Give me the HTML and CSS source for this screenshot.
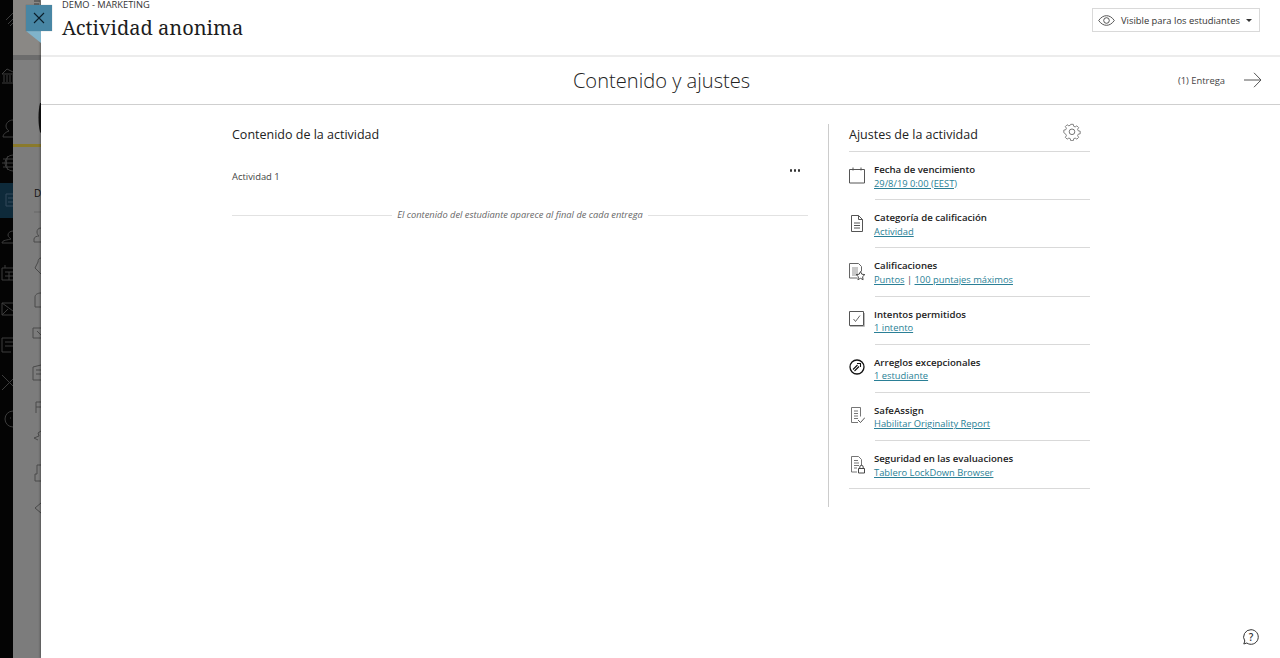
FILE: index.html
```html
<!DOCTYPE html>
<html lang="es">
<head>
<meta charset="utf-8">
<title>Actividad anonima</title>
<link rel="stylesheet" href="styles.css">
</head>
<body>
<div class="app">
  <nav class="rail">
    <div class="rail-active"></div>
    <svg class="rail-art" width="13" height="658" viewBox="0 0 13 658" fill="none" stroke="#3c3c3c" stroke-width="1">
      <path d="M6 20l7-7M8 24l5-5M10 26l3-3"/>
      <path d="M2 74l5-5 6 3M2 74h11M4 75v7M7 75v7M10 75v7M13 75v7M2 83h11"/>
      <path d="M13 120c-4 0-7 3-7 6s2 4 3 5c-3 1-6 3-6 6h10"/>
      <path d="M13 155a8 8 0 0 0 0 16M2 163h11M8 156c-2 4-2 10 0 14M3 159h10M3 167h10"/>
      <path d="M6 194h7M6 194v12h7M8 198h5M8 202h5" stroke="#33495a"/>
      <path d="M13 231c-3 0-5 2-5 4s2 3 3 4c-3 1-9 1-9 4h11"/>
      <path d="M2 268h11M2 268v12h11M5 265v3M5 272h8M5 276h8M9 272v8"/>
      <path d="M2 303h11M2 303v12h11M2 303l11 8M2 315l6-6"/>
      <path d="M2 338h11M2 338v14h9M5 342h8M5 346h8"/>
      <path d="M2 375l11 11M2 390l11-11"/>
      <path d="M13 411a8 8 0 0 0 0 16M10 418h1"/>
    </svg>
  </nav>
  <aside class="backdrop">
    <div class="back-top"></div>
    <div class="back-rule"></div>
    <div class="back-band"></div>
    <div class="back-list"></div>
    <span class="back-letter">D</span>
    <svg class="back-art" width="28" height="658" viewBox="0 0 28 658" fill="none" stroke="#4a4a4a">
      <path d="M21 1h6M21 4h5" stroke="#3a3a3a"/>
      <path d="M27 103c-2 8-2 21 0 29l1 1v-30z" fill="#111" stroke="none"/>
      <path d="M21 212h7" stroke="#666"/>
      <path d="M28 228c-3 0-4 2-4 4s1 3 2 4c-2 0-5 1-5 3v3h7"/>
      <path d="M28 258c-2 0-3 2-3 4l-3 6 6 6"/>
      <path d="M28 293c-4 0-6 2-6 4v10h6"/>
      <path d="M28 328h-8v10h8M24 331l4 4"/>
      <path d="M28 365l-8 2v13h8M23 370h5M23 374h5"/>
      <path d="M28 402h-5v5h5M23 407v6"/>
      <path d="M28 431l-3 2 1 3-5 2 4 2"/>
      <path d="M28 465h-4v9h-2v7h6"/>
      <path d="M28 503l-6 5 6 5"/>
    </svg>
  </aside>
  <main class="panel">
    <a class="close" href="#" aria-label="Cerrar">
      <svg width="12" height="12" viewBox="0 0 12 12" fill="none" stroke="#0b1f2b" stroke-width="1.1"><path d="M1 1l10 10M11 1L1 11"/></svg>
    </a>
    <div class="close-fold"></div>
    <header class="top">
      <div class="titles">
        <div class="crumb">DEMO - MARKETING</div>
        <h1>Actividad anonima</h1>
      </div>
      <button class="visible">
        <svg width="17" height="11" viewBox="0 0 17 11" fill="none" stroke="#444" stroke-width="0.9"><path d="M.7 5.500C3 2.200 5.600.7 8.500.7s5.500 1.500 7.800 4.800C14 8.800 11.400 10.300 8.500 10.300S3 8.800.7 5.500z"/><circle cx="8.500" cy="5.500" r="2.800"/></svg>
        <span>Visible para los estudiantes</span>
        <i class="caret"></i>
      </button>
    </header>
    <section class="subhead">
      <h2>Contenido y ajustes</h2>
      <div class="next">
        <span>(1) Entrega</span>
        <svg width="18" height="16" viewBox="0 0 18 16" fill="none" stroke="#555" stroke-width="1"><path d="M0 8h17M10 .8L17 8l-7 7.200"/></svg>
      </div>
    </section>
    <div class="content">
      <section class="left">
        <h3>Contenido de la actividad</h3>
        <div class="item">
          <span>Actividad 1</span>
          <span class="dots"><b></b><b></b><b></b></span>
        </div>
        <div class="sep"><em>El contenido del estudiante aparece al final de cada entrega</em></div>
      </section>
      <section class="right">
        <div class="right-head">
          <h3>Ajustes de la actividad</h3>
          <svg width="18" height="18" viewBox="0 0 18 18" fill="none" stroke="#666" stroke-width="0.9"><path d="M7.600 1h2.800l.5 2.200 1.600.7 1.900-1.200 2 2-1.200 1.900.7 1.600 2.200.5v2.800l-2.200.5-.7 1.600 1.200 1.900-2 2-1.900-1.200-1.600.7-.5 2.200H7.600l-.5-2.200-1.600-.7-1.900 1.200-2-2 1.200-1.900-.7-1.600L-.1 10.300V7.500l2.200-.5.7-1.600-1.200-1.900 2-2 1.900 1.200 1.600-.7z" transform="translate(.9 .4) scale(.9)"/><circle cx="9" cy="8.800" r="2.800"/></svg>
        </div>
        <ul class="settings">
          <li>
            <svg width="16" height="17" viewBox="0 0 16 17" fill="none" stroke="#555"><path d="M.5 2.500h15v13.500H.5zM4 .5v3M12 .5v3"/></svg>
            <div><strong>Fecha de vencimiento</strong><a href="#">29/8/19 0:00 (EEST)</a></div>
          </li>
          <li>
            <svg width="16" height="18" viewBox="0 0 16 18" fill="none" stroke="#555"><path d="M2.500.5h7l4 4v12h-11zM9.500.5v4h4M5 8h6M5 10.500h6M5 13h6"/></svg>
            <div><strong>Categoría de calificación</strong><a href="#">Actividad</a></div>
          </li>
          <li>
            <svg width="16" height="18" viewBox="0 0 16 18" fill="none" stroke="#666"><path d="M8 15H.5V.5h9l3 3v5"/><path d="M3 4h6v9H3z" fill="#c8c8c8" stroke="none"/><path d="M11.500 8.500l1.300 2.700 3 .4-2.200 2.100.5 3-2.600-1.400-2.600 1.400.5-3-2.200-2.100 3-.4z" fill="#fff" stroke="#333" stroke-width=".9"/></svg>
            <div><strong>Calificaciones</strong><span class="links"><a href="#">Puntos</a> | <a href="#">100 puntajes máximos</a></span></div>
          </li>
          <li>
            <svg width="16" height="17" viewBox="0 0 16 17" fill="none" stroke="#555"><path d="M.5.500h14v14H.5z"/><path d="M1 15.500h14.500V2" stroke="#bbb"/><path d="M4.500 8l2 2.500 4.500-6" stroke-width=".9"/></svg>
            <div><strong>Intentos permitidos</strong><a href="#">1 intento</a></div>
          </li>
          <li>
            <svg width="16" height="16" viewBox="0 0 16 16" fill="none" stroke="#111"><circle cx="8" cy="8" r="7" stroke-width="1.300"/><path d="M4 10.500l4.500-4.500M5.500 12l4.500-4.500M8 4.500h3.500V8" stroke-width="1.100"/></svg>
            <div><strong>Arreglos excepcionales</strong><a href="#">1 estudiante</a></div>
          </li>
          <li>
            <svg width="16" height="18" viewBox="0 0 16 18" fill="none" stroke="#666" stroke-width=".9"><path d="M9 15.500H2.500V.5h9v9M5 4h4M5 6.500h4M5 9h4M5 11.500h4"/><path d="M9 13l2.500 2.500L16 10.500" stroke="#444"/></svg>
            <div><strong>SafeAssign</strong><a href="#">Habilitar Originality Report</a></div>
          </li>
          <li>
            <svg width="16" height="18" viewBox="0 0 16 18" fill="none" stroke="#666" stroke-width=".9"><path d="M8 16H2.500V.5h7l3 3v6M5 4.500h4M5 7h5M5 9.500h5M5 12h3"/><path d="M9.500 12.500h6v4.500h-6zM10.800 12.500V11a1.700 1.700 0 0 1 3.400 0v1.500" stroke="#333"/></svg>
            <div><strong>Seguridad en las evaluaciones</strong><a href="#">Tablero LockDown Browser</a></div>
          </li>
        </ul>
      </section>
    </div>
    <a class="help" href="#" aria-label="Ayuda">
      <svg width="16" height="16" viewBox="0 0 16 16" fill="none" stroke="#333"><path d="M8 .7a7.300 7.300 0 1 1-4.200 13.300l-3 1 1-3A7.300 7.300 0 0 1 8 .7z"/></svg>
      <span>?</span>
    </a>
  </main>
</div>
</body>
</html>
```
FILE: styles.css
```css
* { box-sizing: border-box; }
html, body { margin: 0; height: 100%; overflow: hidden; }
body { font-family: "Open Sans", "Liberation Sans", sans-serif; color: #262626; background: #fff; }
.app { display: flex; height: 658px; }

.rail { width: 13px; flex: none; background: #040404; position: relative; overflow: hidden; }
.rail-art { display: block; position: relative; }
.rail-active { position: absolute; left: 0; top: 183px; width: 13px; height: 35px; background: #0e2a3a; }

.backdrop { width: 28px; flex: none; background: #7c7c7c; display: flex; flex-direction: column; overflow: hidden; position: relative; }
.back-top { height: 55px; background: #8a8885; flex: none; }
.back-rule { height: 5px; background: #6c6c6c; flex: none; }
.back-band { height: 87px; background: #7f7f7f; border-bottom: 3px solid #8a7a2c; flex: none; }
.back-list { flex: 1; }
.back-letter { position: absolute; left: 21px; top: 185px; font-size: 10px; line-height: 16px; color: #111; }
.back-art { position: absolute; left: 0; top: 0; }

.panel { flex: 1; min-width: 0; background: #fff; position: relative; display: flex; flex-direction: column; box-shadow: -1px 0 2px rgba(0,0,0,.3); }

.close { position: absolute; left: -15px; top: 5px; width: 26px; height: 26px; background: #4886a4; display: flex; align-items: center; justify-content: center; box-shadow: 0 0 1px rgba(0,0,0,.3); z-index: 2; }
.close-fold { position: absolute; left: -15px; top: 31px; width: 0; height: 0; border-top: 12px solid #80b3ca; border-left: 15px solid transparent; z-index: 1; }

.top { height: 57px; flex: none; display: flex; justify-content: space-between; align-items: flex-start; padding: 0 20px 0 21px; border-bottom: 2px solid #ececec; }
.crumb { font-size: 9.300px; line-height: 12px; color: #333; margin-top: -1px; }
h1 { margin: 3px 0 0; font-family: "Noto Serif", "DejaVu Serif", "Liberation Serif", serif; font-weight: 400; font-size: 20px; line-height: 28px; color: #1d1d1d; }
.visible { margin-top: 8px; width: 168px; height: 24px; border: 1px solid #d9d9d9; background: #fff; display: flex; align-items: center; padding: 0 7px 0 5px; font: 400 9.400px "Open Sans", sans-serif; color: #333; }
.visible svg { flex: none; }
.visible span { margin-left: 6px; white-space: nowrap; }
.caret { margin-left: 6px; width: 0; height: 0; border: 3px solid transparent; border-top-color: #333; border-bottom: 0; }

.subhead { height: 48px; flex: none; display: flex; align-items: center; justify-content: center; position: relative; border-bottom: 1px solid #cfcfcf; }
h2 { margin: 0 0 0 2px; font-weight: 300; font-size: 20.100px; color: #222; }
.next { position: absolute; right: 18px; top: 15px; display: flex; align-items: center; gap: 19px; font-size: 9.400px; color: #444; }

.content { flex: 1; display: flex; padding: 20px 190px 0 191px; align-items: flex-start; }
.left { width: 576px; flex: none; }
h3 { margin: 0; font-weight: 400; font-size: 12.500px; line-height: 20px; color: #222; }
.item { display: flex; justify-content: space-between; margin-top: 16px; font-size: 9.400px; color: #444; height: 24px; position: relative; }
.item > span:first-child { margin-top: 9px; line-height: 14px; }
.dots { display: flex; gap: 1.500px; margin: 8px 8px 0 0; }
.dots b { width: 2.500px; height: 2.500px; background: #333; border-radius: 50%; }
.sep { display: flex; align-items: center; gap: 5px; margin-top: 23px; font-size: 9.300px; color: #666; line-height: 14px; }
.sep::before, .sep::after { content: ""; flex: 1; height: 1px; background: #e2e2e2; }

.right { width: 262px; margin-left: 20px; padding-left: 20px; height: 383px; margin-top: -1px; border-left: 1px solid #ccc; flex: none; }
.right-head { display: flex; justify-content: space-between; align-items: flex-start; height: 28px; padding-right: 9px; border-bottom: 1px solid #d9d9d9; }
.right-head h3 { margin-top: 1px; }
.right-head svg { margin-top: -1px; }
.settings { list-style: none; margin: 0; padding: 0; }
.settings li { height: 48.200px; display: flex; gap: 9px; padding-top: 11px; position: relative; }
.settings li::after { content: ""; position: absolute; left: 26px; right: 0; bottom: 0; height: 1px; background: #d9d9d9; }
.settings li:last-child::after { left: 0; }
.settings li > svg { flex: none; margin-top: 3.500px; }
.settings li > div { display: flex; flex-direction: column; }
strong { font-weight: 600; font-size: 9.650px; line-height: 13.500px; color: #222; }
.settings a { font-size: 9.350px; line-height: 13.500px; color: #2a7f96; text-decoration: underline; }
.links { font-size: 9.350px; line-height: 13.500px; color: #444; }

.help { position: absolute; right: 21px; bottom: 13px; width: 16px; height: 16px; display: block; text-decoration: none; }
.help svg { display: block; }
.help span { position: absolute; left: 0; right: 0; top: 0; text-align: center; font-size: 10px; line-height: 16px; font-weight: 600; color: #333; }
```
